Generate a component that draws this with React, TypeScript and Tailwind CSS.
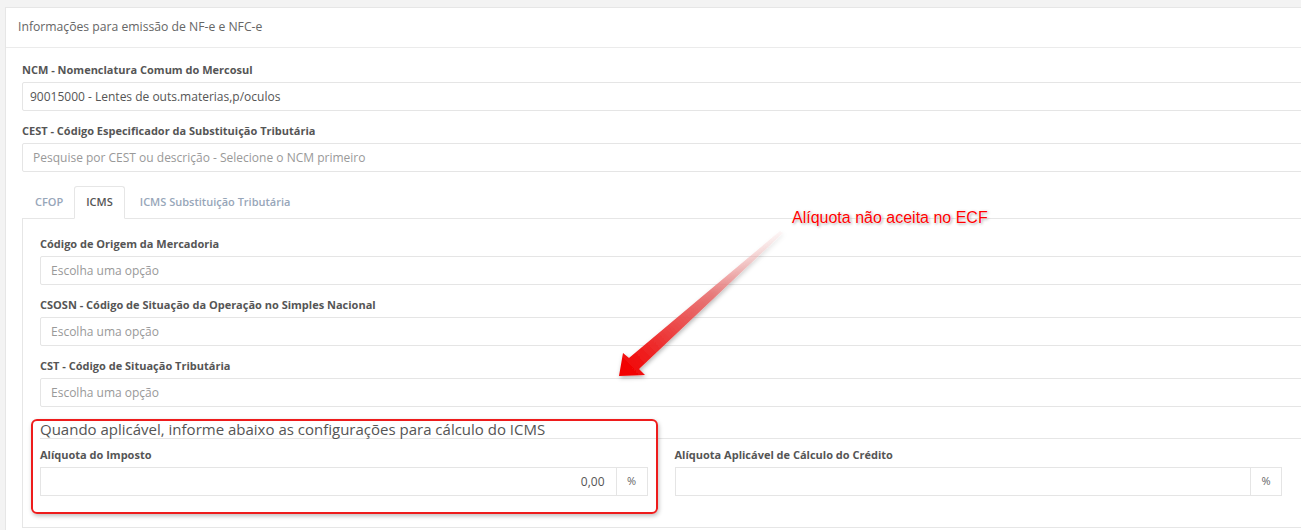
import React from "react";

const font = "font-['Open_Sans','Liberation_Sans',sans-serif]";

function Label({ children }: { children: React.ReactNode }) {
  return <label className="block text-[11px] leading-[16px] font-bold text-[#555] mb-[4px]">{children}</label>;
}

function Field({
  label,
  value,
  placeholder,
  padLeft = "pl-[7px]",
  className = "",
}: {
  label: string;
  value?: string;
  placeholder?: string;
  padLeft?: string;
  className?: string;
}) {
  return (
    <div className={className}>
      <Label>{label}</Label>
      <div className={`h-[29px] border border-[#e5e5e5] rounded-[2px] bg-white flex items-center ${padLeft} text-[12px]`}>
        {value ? <span className="text-[#555]">{value}</span> : <span className="text-[#999]">{placeholder}</span>}
      </div>
    </div>
  );
}

function PercentInput({ label, value }: { label: string; value?: string }) {
  return (
    <div>
      <Label>{label}</Label>
      <div className="flex h-[29px]">
        <div className="flex-1 border border-[#e5e5e5] border-r-0 bg-white flex items-center justify-end pr-[11px] text-[12px] text-[#555]">
          {value}
        </div>
        <div className="w-[32px] border border-[#e5e5e5] bg-white flex items-center justify-center text-[11px] text-[#666]">%</div>
      </div>
    </div>
  );
}

export default function App() {
  return (
    <div className={`relative w-[1301px] h-[530px] overflow-hidden bg-[#f3f3f3] ${font}`}>
      <div className="ml-[5px] mt-[7px] w-[1340px] bg-white border border-[#e6e6e6]">
        <div className="h-[40px] border-b border-[#ebebeb] px-[12px] flex items-center text-[12.2px] text-[#666]">
          Informações para emissão de NF-e e NFC-e
        </div>

        <div className="px-[16px] pt-[14px] pb-[4px]">
          <Field label="NCM - Nomenclatura Comum do Mercosul" value="90015000 - Lentes de outs.materias,p/oculos" className="mb-[12px]" />
          <Field
            label="CEST - Código Especificador da Substituição Tributária"
            placeholder="Pesquise por CEST ou descrição - Selecione o NCM primeiro"
            padLeft="pl-[10px]"
          />

          {/* tabs */}
          <div className="mt-[14px] flex h-[33px] border-b border-[#e6e6e6] text-[11px] font-semibold">
            <div className="pl-[13px] pr-[9px] mr-[2px] flex items-center text-[#97a6b9]">CFOP</div>
            <div className="px-[11px] mr-[2px] flex items-center border border-[#e6e6e6] border-b-white -mb-px rounded-t-[3px] bg-white text-[#555]">
              ICMS
            </div>
            <div className="px-[13px] flex items-center text-[#97a6b9]">ICMS Substituição Tributária</div>
          </div>

          <div className="border-l border-b border-[#e6e6e6] pl-[17px] pt-[17px] pb-[31px]">
            <Field label="Código de Origem da Mercadoria" placeholder="Escolha uma opção" padLeft="pl-[10px]" className="mb-[12px]" />
            <Field
              label="CSOSN - Código de Situação da Operação no Simples Nacional"
              placeholder="Escolha uma opção"
              padLeft="pl-[10px]"
              className="mb-[12px]"
            />
            <Field label="CST - Código de Situação Tributária" placeholder="Escolha uma opção" padLeft="pl-[10px]" />

            <div className="mt-[14px] text-[15px] leading-[17px] text-[#555] border-b border-[#e6e6e6]">
              Quando aplicável, informe abaixo as configurações para cálculo do ICMS
            </div>

            <div className="mt-[8px] w-[1242px] grid grid-cols-2 gap-[27px]">
              <PercentInput label="Alíquota do Imposto" value="0,00" />
              <PercentInput label="Alíquota Aplicável de Cálculo do Crédito" />
            </div>
          </div>
        </div>
      </div>

      {/* highlight box around the ICMS rate group */}
      <div className="absolute left-[31px] top-[419px] w-[627px] h-[95px] border-2 border-[#ee1c1c] rounded-[6px] shadow-[1px_2px_4px_rgba(0,0,0,0.25)]" />

      {/* callout arrow */}
      <svg className="absolute left-[600px] top-[210px]" width="200" height="185" viewBox="600 210 200 185">
        <defs>
          <linearGradient id="arrowFill" x1="782" y1="232" x2="625" y2="370" gradientUnits="userSpaceOnUse">
            <stop offset="0" stopColor="#f8d6d6" stopOpacity="0.2" />
            <stop offset="0.45" stopColor="#e86a6a" stopOpacity="0.85" />
            <stop offset="1" stopColor="#f20000" />
          </linearGradient>
          <filter id="arrowShadow" x="-20%" y="-20%" width="140%" height="140%">
            <feDropShadow dx="1" dy="2" stdDeviation="2" floodColor="#000" floodOpacity="0.3" />
          </filter>
        </defs>
        <polygon
          points="619,376 645,375 639,369 783,233 780,231 629,358 623,353"
          fill="url(#arrowFill)"
          filter="url(#arrowShadow)"
        />
      </svg>

      <div className="absolute left-[792px] top-[208px] text-[16px] leading-[20px] text-[#ff0000] font-['Liberation_Sans',Arial,sans-serif] [text-shadow:0_0_2px_#fff,0_0_2px_#fff,1px_1px_3px_rgba(0,0,0,0.45)]">
        Alíquota não aceita no ECF
      </div>
    </div>
  );
}
